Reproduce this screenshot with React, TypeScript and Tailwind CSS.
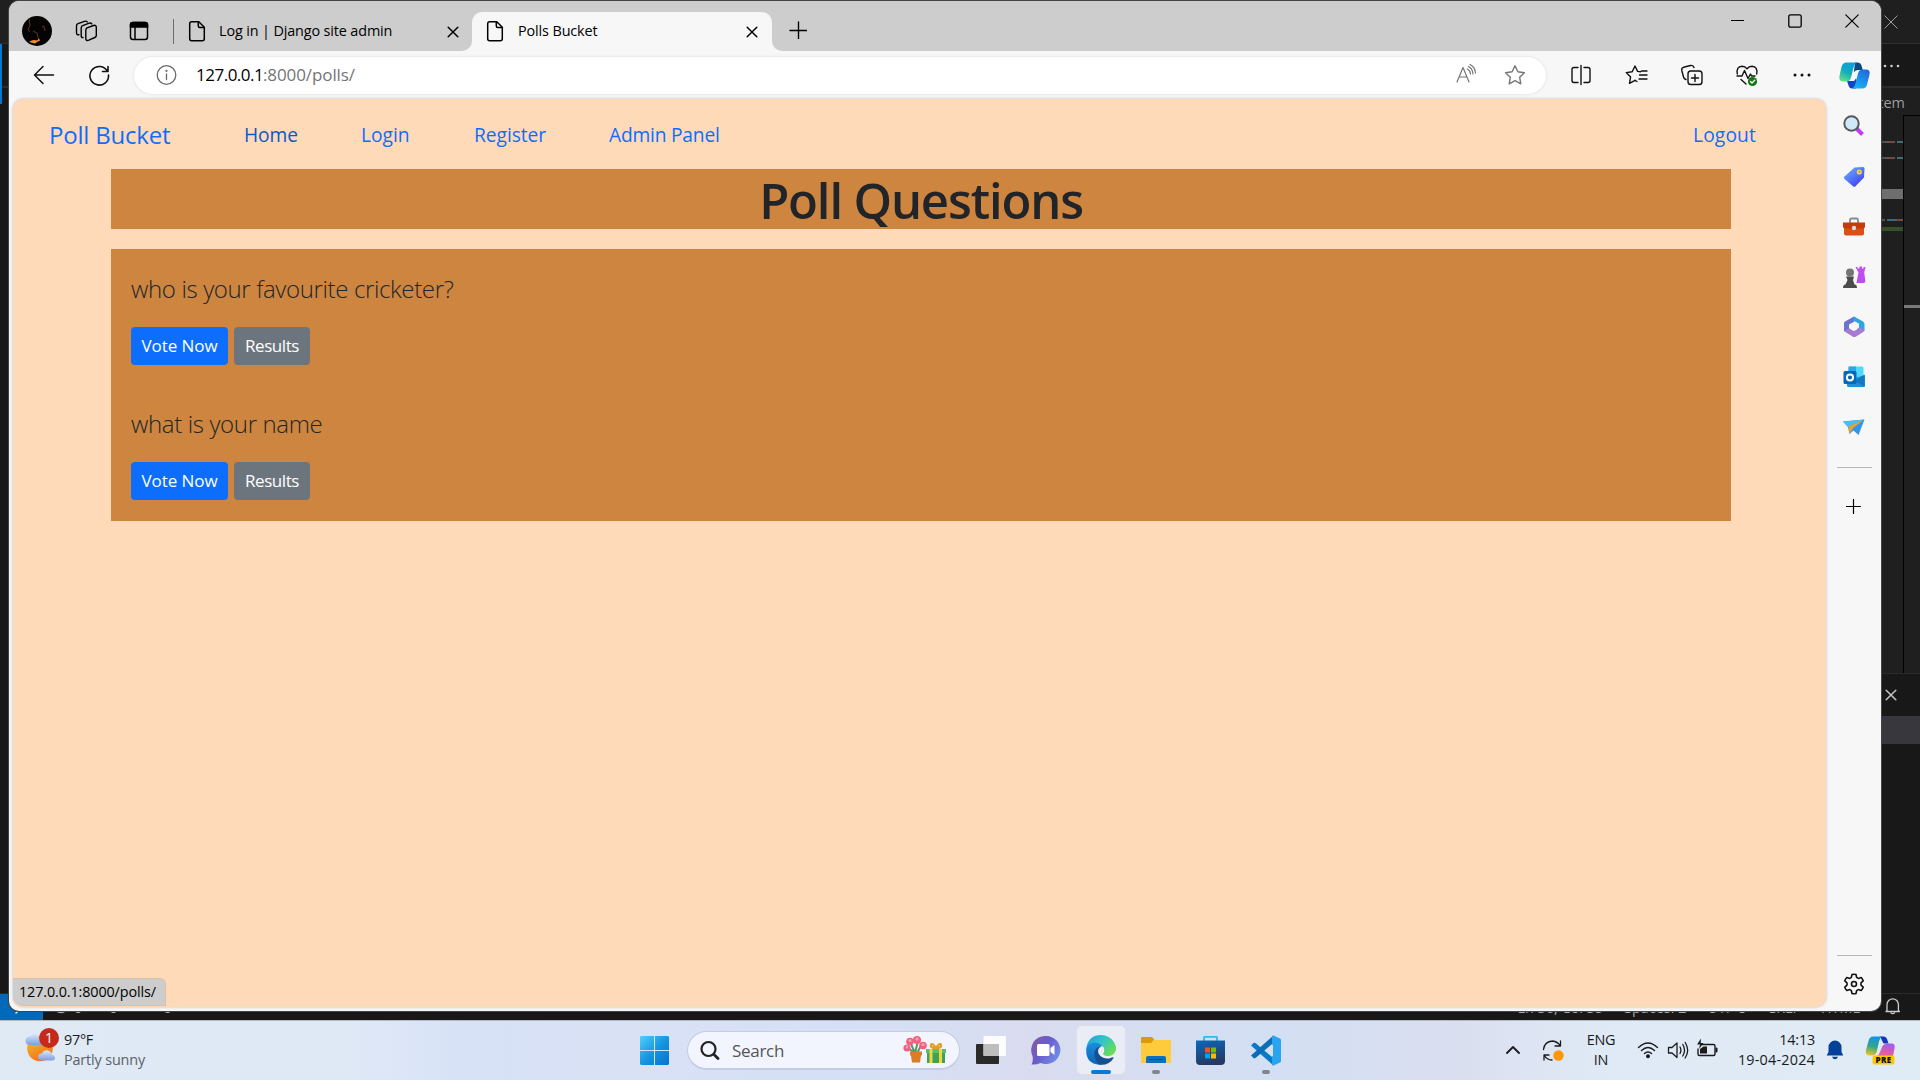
import type { ReactNode } from 'react';

function Icon({ size = 24, className = '', sw = 1.3, children }: { size?: number; className?: string; sw?: number; children: ReactNode }) {
  return (
    <svg
      width={size}
      height={size}
      viewBox={`0 0 ${size} ${size}`}
      fill="none"
      stroke="currentColor"
      strokeWidth={sw}
      strokeLinecap="round"
      strokeLinejoin="round"
      className={`block shrink-0 ${className}`}
    >
      {children}
    </svg>
  );
}

const PageIcon = ({ className = '' }: { className?: string }) => (
  <Icon className={className} sw={1.5}>
    <path d="M6.500 2.700h7.300l5.500 5.500v11.500a2 2 0 0 1-2 2H6.700a2 2 0 0 1-2-2v-15a2 2 0 0 1 2-2z" />
    <path d="M13.300 3v4a1.500 1.500 0 0 0 1.500 1.500H19" />
  </Icon>
);

const CloseIcon = ({ className = '' }: { className?: string }) => (
  <Icon size={12} sw={1.5} className={className}>
    <path d="M1.200 1.200l9.600 9.600M10.800 1.200l-9.600 9.600" />
  </Icon>
);

function TabBar() {
  return (
    <div className="flex h-[50px] shrink-0 items-start bg-[#cdcdcd] text-black">
      <svg width="30" height="30" viewBox="0 0 30 30" className="mt-[15px] ml-[13px] shrink-0">
        <circle cx="15" cy="15" r="15" fill="#050303" />
        <path d="M7 2.500 8 9l-2 5 2 2M11 15l4 2 2 8M20 11l2-1 1 5" stroke="#5b3620" fill="none" />
        <path d="M7 26q4-3 8-1.500l2-2 1 2q-4 2-5 3z" fill="#f0922a" />
      </svg>
      <Icon className="mt-[18px] ml-[23px]" sw={1.4}>
        <path d="M11.500 9.200 18.500 6.500q2.800-.8 2.800 1.800v8.200q0 1.500-1.500 2l-6 2.700q-3 1-3-1.700v-8q0-1.600.7-2.300z" />
        <path d="M8 18.500q-1.800.3-1.800-1.700V9q0-1.800 1.500-2.300l6.500-2.500q1.800-.5 2.600.7" />
        <path d="M4 15.700Q1.500 16 1.500 13.700V7q0-1.800 1.500-2.300l6.500-2.400q1.800-.6 2.700.6" />
      </Icon>
      <Icon className="mt-[18px] ml-7" sw={1.5}>
        <rect x="3.500" y="3.500" width="17" height="17" rx="2.500" />
        <path d="M3.500 8V6a2.500 2.500 0 0 1 2.500-2.500h12A2.500 2.500 0 0 1 20.500 6v2z" fill="currentColor" />
        <path d="M8 8v12" />
      </Icon>
      <div className="mt-[18px] ml-[22px] h-[25px] w-px bg-[#6e6e6e]" />
      <PageIcon className="mt-[18px] ml-[11px]" />
      <span className="mt-[18px] ml-[10px] w-[228px] text-[14.4px] leading-6 tracking-[-0.13px] whitespace-nowrap">Log in | Django site admin</span>
      <CloseIcon className="mt-[25px]" />
      <div className="mt-[40px] ml-[3px] h-[10px] w-[10px] bg-[#f7f7f7]">
        <div className="h-full w-full rounded-br-[10px] bg-[#cdcdcd]" />
      </div>
      <div className="mt-[11px] flex h-[39px] w-[300px] rounded-t-[10px] bg-[#f7f7f7]">
        <PageIcon className="mt-[7px] ml-[11px]" />
        <span className="mt-[7px] ml-[11px] w-[228px] text-[14.4px] leading-6 tracking-[-0.12px]">Polls Bucket</span>
        <CloseIcon className="mt-[14px]" />
      </div>
      <div className="mt-[40px] h-[10px] w-[10px] bg-[#f7f7f7]">
        <div className="h-full w-full rounded-bl-[10px] bg-[#cdcdcd]" />
      </div>
      <Icon size={18} sw={1.4} className="mt-[20px] ml-[7px]">
        <path d="M9.500 1v17M1 9.500h17" />
      </Icon>
      <div className="mt-[13px] mr-[22px] ml-auto flex gap-[43px]">
        <Icon size={14} sw={1.2}><path d="M0 6.500h13" strokeLinecap="butt" /></Icon>
        <Icon size={14} sw={1.3}><rect x=".8" y=".8" width="12.400" height="12.400" rx="1.800" /></Icon>
        <Icon size={14} sw={1.2}><path d="M.8.800l12.400 12.400M13.200.800.800 13.200" /></Icon>
      </div>
    </div>
  );
}

const CopilotLogo = () => (
  <svg width="31" height="27" viewBox="0 0 31 27" className="block shrink-0">
    <defs>
      <linearGradient id="cpA" x1=".6" y1="0" x2=".2" y2="1">
        <stop offset="0" stopColor="#0a9de0" />
        <stop offset=".5" stopColor="#12aeb8" />
        <stop offset="1" stopColor="#66e08a" />
      </linearGradient>
      <linearGradient id="cpB" x1=".8" y1="0" x2=".2" y2="1">
        <stop offset="0" stopColor="#2168d8" />
        <stop offset="1" stopColor="#17b6fb" />
      </linearGradient>
    </defs>
    <path d="M16 .5h3q2.600 0 3.300 2.500l1.500 5h-5q-3 0-4 2.500z" fill="#0b4a80" />
    <path d="M8 19h7l2-2.500 2 4.500-2 5.500h-4q-2.500 0-3.300-2.500z" fill="#1443c4" />
    <path d="M7.500.5h10q-2 1-3 5L12 15.500q-1 4-4.500 4H4q-4.500 0-3.500-5.500l2-9Q3.500.5 7.500.5z" fill="url(#cpA)" />
    <path d="M23.500 7.500H27q4.500 0 3.500 5l-2.200 9q-1 5-5 5h-10q2-.8 3-4.500L19 11.500q1-4 4.500-4z" fill="url(#cpB)" />
  </svg>
);

function Toolbar() {
  return (
    <div className="flex h-12 shrink-0 items-center bg-[#f7f7f7] text-[#111]">
      <Icon className="ml-[23px]" sw={1.5}>
        <path d="M21.500 12H2.500M11 3.500 2.500 12l8.500 8.500" />
      </Icon>
      <Icon className="ml-[31px]" sw={1.6}>
        <path d="M20.500 8.500A9.300 9.300 0 1 0 21.500 12M21 3.500v5h-5.500" />
      </Icon>
      <div className="ml-[23px] flex h-[37px] w-[1412px] items-center rounded-full bg-white shadow-[0_0_3px_rgba(0,0,0,0.12)]">
        <Icon className="ml-5 text-[#6a6a6a]">
          <circle cx="12.500" cy="12" r="9.300" />
          <path d="M12.500 11v5.500" />
          <circle cx="12.500" cy="7.800" r=".5" fill="currentColor" />
        </Icon>
        <div className="ml-[18px] text-[17px] leading-6 text-[#757575]">
          <span className="inline-block w-[67px] tracking-[-0.5px] text-black">127.0.0.1</span>
          <span className="tracking-[-0.1px]">:8000/polls/</span>
        </div>
        <Icon className="ml-auto text-[#767676]" sw={1.2}>
          <path d="M3 19 9 4.500 15 19M5.200 14h7.600M13.500 6q2.500 1.500 3 5M14.500 3.500q4 2 4.500 7.500M16 1.500q5 2.500 5.500 8.500" />
        </Icon>
        <Icon className="mr-[19px] ml-[25px] text-[#767676]" sw={1.4}>
          <path d="m12 2.800 2.900 6 6.500.9-4.700 4.600 1.100 6.500L12 17.700l-5.800 3.100 1.100-6.500-4.700-4.600 6.500-.9z" />
        </Icon>
      </div>
      <Icon className="ml-[23px]" sw={1.4}>
        <path d="M9 4.500H5a2 2 0 0 0-2 2v11a2 2 0 0 0 2 2h4M15 4.500h4a2 2 0 0 1 2 2v11a2 2 0 0 1-2 2h-4M12 2.500v19" />
      </Icon>
      <Icon className="ml-8" sw={1.4}>
        <path d="M15.500 8.700 12.600 8.400 10 3 7.200 8.700l-6 .9 4.400 4.300-1.100 6.400L10 17.300M14.500 12H22M14 16h8M16.500 8H22M10 17.300l2 1.200" />
      </Icon>
      <Icon className="ml-[31px]" sw={1.4}>
        <rect x="8" y="8" width="14" height="13.500" rx="2.800" />
        <path d="M15 11.500v7M11.500 15h7M6 16.500Q4 16 3.500 14L1.800 7.500Q1.300 5 3.500 4.300L10.500 2.500q2.800-.5 3.500 2" />
      </Icon>
      <Icon className="ml-[31px]" sw={1.4}>
        <path d="M2.300 11Q1 3.500 7 3.200q3.200 0 5 2.600Q14 3.200 17 3.200q6 .3 4.700 7.800M2 13h5l2.500-5.500 3.500 8 2.500-4.500 1 2H20M6 16.500l5 4.500" />
        <circle cx="17.500" cy="18.500" r="4.600" fill="#107c10" stroke="none" />
        <path d="m15.500 18.500 1.500 1.500 2.700-2.800" stroke="#fff" />
      </Icon>
      <Icon className="ml-[31px]" sw={0}>
        <g fill="#111"><circle cx="5" cy="12" r="1.500" /><circle cx="12" cy="12" r="1.500" /><circle cx="19" cy="12" r="1.500" /></g>
      </Icon>
      <div className="ml-[25px]"><CopilotLogo /></div>
    </div>
  );
}

const nav = 'text-[19.2px] leading-7 whitespace-nowrap text-[#0d6efd]';

function Poll({ question, gap }: { question: string; gap: string }) {
  return (
    <article className={gap}>
      <p className="text-[24px] leading-[38px] font-light tracking-[-0.36px] text-[#212529]">{question}</p>
      <div className="mt-[19px] flex gap-[6px] text-[17px] text-white">
        <button className="h-[38px] w-[97px] rounded-[4px] bg-[#0d6efd] tracking-[-0.05px]">Vote Now</button>
        <button className="h-[38px] w-[76px] rounded-[4px] bg-[#6c757d] tracking-[-0.45px]">Results</button>
      </div>
    </article>
  );
}

function PollsPage() {
  return (
    <main className="flex h-[908px] w-[1813px] flex-col overflow-hidden rounded-[10px] bg-[#ffdab9] shadow-[0_0_3px_rgba(0,0,0,0.25)]">
      <nav className="flex h-[70px] shrink-0 items-center pt-[2px] pr-[70px] pl-9">
        <a className="w-[195px] text-[24px] leading-8 tracking-[-0.2px] text-[#0d6efd]">Poll Bucket</a>
        <a className="w-[117px] text-[19.2px] leading-7 tracking-[-0.1px] text-[#0a58ca]">Home</a>
        <a className={`w-[113px] ${nav}`}>Login</a>
        <a className={`w-[135px] tracking-[-0.05px] ${nav}`}>Register</a>
        <a className={`tracking-[-0.2px] ${nav}`}>Admin Panel</a>
        <a className={`ml-auto tracking-[0.15px] ${nav}`}>Logout</a>
      </nav>
      <div className="mr-[95px] ml-[98px] flex flex-col gap-5">
        <h1 className="h-[60px] bg-[#cd853f] text-center text-[49px] leading-[62px] font-semibold tracking-[-1.150px] text-[#212529]">Poll Questions</h1>
        <section className="h-[272px] bg-[#cd853f] px-5 pt-[21px]">
          <Poll question="who is your favourite cricketer?" gap="mb-10" />
          <Poll question="what is your name" gap="" />
        </section>
      </div>
    </main>
  );
}

function Sidebar() {
  return (
    <aside className="flex flex-1 flex-col items-center pl-px">
      <svg width="24" height="24" viewBox="0 0 24 24" className="mt-[15px] shrink-0">
        <path d="m14.500 14.500 6 6" stroke="#c13df5" strokeWidth="4" />
        <circle cx="9.500" cy="9.500" r="7.200" fill="#cfe9fb" stroke="#585858" strokeWidth="2" />
      </svg>
      <svg width="24" height="24" viewBox="0 0 24 24" className="mt-[27px] shrink-0">
        <defs>
          <linearGradient id="tag" x1="0" y1="0" x2=".8" y2="1"><stop offset="0" stopColor="#6fb6ff" /><stop offset="1" stopColor="#3d3df0" /></linearGradient>
        </defs>
        <path d="M12.500 2.500 21 2q1.500 0 1.500 1.500l-.5 9-8.500 8.800q-1.200 1-2.500 0L2.500 14q-1.200-1.200 0-2.500z" fill="url(#tag)" />
        <circle cx="17.300" cy="7" r="2.600" fill="#ffd335" />
        <circle cx="17.500" cy="6.800" r=".9" fill="#5b8ff5" />
      </svg>
      <svg width="24" height="24" viewBox="0 0 24 24" className="mt-[27px] shrink-0">
        <path d="M8 7V4q0-1.500 1.500-1.500h5Q16 2.500 16 4v3" fill="none" stroke="#8a8a8a" strokeWidth="1.800" />
        <path d="M2 11h20v6.500q0 2-2 2H4q-2 0-2-2z" fill="#dc4f15" />
        <path d="M1 6.500h22v4q0 2-2 2H3q-2 0-2-2z" fill="#c43c0b" />
        <circle cx="12" cy="12" r="2.200" fill="#d9d9d9" />
      </svg>
      <svg width="24" height="24" viewBox="0 0 24 24" className="mt-[25px] shrink-0">
        <path d="M13.500 2h2v1.500h2V1.500h2.500v2h1.500V2h2l-1.300 5.500 1 7.300q.5 3.200-1.700 3.200h-7l2-10.500z" fill="#bf4bf3" />
        <circle cx="8" cy="7.500" r="4" fill="#757575" />
        <path d="M4 11.500h8L11 15l1.500 4.500q2.500 0 2.500 3.500H1q0-3.500 2.500-3.500L5.500 15z" fill="#4c4c4c" />
      </svg>
      <svg width="24" height="24" viewBox="0 0 24 24" className="mt-[26px] shrink-0">
        <path d="m12 1.500-9 5q-1 .6-1 2v7.500l5 3V9.500l9-5z" fill="#6d71cf" />
        <path d="m12 1.500 9 5q1.500 1 1.500 2.500v7L17 13V8.700l-6-3.500z" fill="#2ea7e0" />
        <path d="m2.300 16 8.500 5.700q1.500.8 3 0l7.700-5q1-.8 1-2L17 12.500l-5 3.600-5-2.800z" fill="#a77bd4" />
        <circle cx="12" cy="11.800" r="3.700" fill="#f7f7f7" />
      </svg>
      <svg width="24" height="24" viewBox="0 0 24 24" className="mt-[26px] shrink-0">
        <rect x="6.500" y="1.500" width="15" height="14" rx="1.500" fill="#50d9ff" />
        <path d="M6.500 1.500h7.500v14H6.500z" fill="#28a8ea" />
        <path d="M5 13h8l10-3v10.500q0 1.500-1.500 1.500h-15Q5 22 5 20.500z" fill="#1b90df" />
        <path d="m13 16 9.500-6.500v12z" fill="#1278c4" />
        <rect x="1.500" y="6" width="13" height="13" rx="1.500" fill="#0669b8" />
        <circle cx="8" cy="12.500" r="3.100" fill="none" stroke="#fff" strokeWidth="2" />
      </svg>
      <svg width="24" height="24" viewBox="0 0 24 24" className="mt-[26px] shrink-0">
        <path d="M1 6.500 22.500 4.500 16.500 20l-5-4.500-4 3.500L6 12z" fill="#2f95ee" />
        <path d="M1 6.500 22.500 4.500 6 12z" fill="#45c0f5" />
        <path d="M22 4.800 6.500 11.500 8 19l3-6z" fill="#f2a21b" />
      </svg>
      <div className="mt-[28px] h-px w-[35px] shrink-0 bg-[#b9b9b9]" />
      <Icon size={16} sw={1.2} className="mt-[31px]"><path d="M7.500 .5v14M.500 7.500h14" /></Icon>
      <div className="mt-auto h-px w-[35px] shrink-0 bg-[#b9b9b9]" />
      <Icon className="mt-4 mb-[15px] text-[#111]" sw={1.6}>
        <path d="M10 2.500q2-.6 4 0l.6 2.900 1.700 1 2.900-.9q1.500 1.500 2 3.400l-2.200 2v2.200l2.200 2q-.5 1.900-2 3.400l-2.900-.9-1.700 1-.6 2.900q-2 .6-4 0l-.6-2.900-1.700-1-2.900.9q-1.500-1.500-2-3.400l2.200-2v-2.200l-2.200-2q.5-1.900 2-3.400l2.900.9 1.700-1z" />
        <circle cx="12" cy="12" r="2.500" />
      </Icon>
    </aside>
  );
}

function Browser() {
  return (
    <div className="absolute top-px left-[9px] flex h-[1010px] w-[1872px] flex-col overflow-hidden rounded-[10px] bg-[#f7f7f7] shadow-[0_0_0_1px_#444]">
      <TabBar />
      <Toolbar />
      <div className="flex min-h-0 flex-1 pl-[4px]">
        <div className="relative">
          <PollsPage />
          <div className="absolute top-[879px] left-0 h-[28px] w-[153px] rounded-tr-[6px] rounded-bl-[10px] border border-l-0 border-[#d9bfa6] bg-[#cdcdcd] pl-[6px] text-[14.4px] leading-[26px] tracking-[-0.13px] text-black">127.0.0.1:8000/polls/</div>
        </div>
        <Sidebar />
      </div>
    </div>
  );
}

function Editor() {
  return (
    <div className="flex h-[1020px] flex-col bg-[#181818] text-[#9d9d9d]">
      <div className="flex h-[44px] shrink-0 justify-end border-b border-[#2f2f2f] bg-[#1f1f1f] pt-[15px] pr-[22px]">
        <Icon size={14} sw={1}><path d="M.8.800l12.400 12.400M13.200.800.800 13.200" /></Icon>
      </div>
      <div className="flex h-[44px] shrink-0 justify-end border-b-2 border-[#2b2b2b] pr-5">
        <Icon size={18} sw={0} className="mt-[13px]">
          <g fill="#ccc"><circle cx="3" cy="9" r="1.300" /><circle cx="9.500" cy="9" r="1.300" /><circle cx="16" cy="9" r="1.300" /></g>
        </Icon>
      </div>
      <div className="ml-auto flex h-[27px] w-20 shrink-0 justify-end bg-[#1f1f1f] pr-[15px] text-[14.4px] leading-[30px] tracking-[0.1px]">item</div>
      <div className="ml-auto flex h-[558px] w-20 shrink-0 justify-end bg-[#1f1f1f]">
        <div className="flex w-[23px] flex-col">
          <div className="mt-[26px] flex h-[2px] shrink-0"><i className="w-[5px] bg-[#3b5566]" /><i className="w-[10px] bg-[#6b4f45]" /><i className="ml-[2px] w-[6px] bg-[#45687c]" /></div>
          <div className="mt-[14px] flex h-[2px] shrink-0"><i className="w-[5px] bg-[#3b5566]" /><i className="w-[10px] bg-[#6b4f45]" /><i className="ml-[2px] w-[6px] bg-[#45687c]" /></div>
          <div className="mt-[30px] h-[10px] shrink-0 bg-[#6e6e6e]" />
          <div className="mt-[20px] flex h-[2px] shrink-0"><i className="ml-[2px] w-[3px] bg-[#6b4f45]" /><i className="ml-[2px] w-[9px] bg-[#3f6680]" /><i className="w-[7px] bg-[#6b4f45]" /></div>
          <div className="mt-[6px] h-[4px] shrink-0 bg-[#36502c]" />
        </div>
        <div className="w-[17px] border-t border-l border-black pt-[189px]"><div className="h-[3px] bg-[#7a7a7a]" /></div>
      </div>
      <div className="ml-auto flex h-[43px] w-20 shrink-0 justify-end border-t border-[#2b2b2b] pt-[15px] pr-[23px] text-[#c5c5c5]"><CloseIcon /></div>
      <div className="ml-auto h-7 w-20 shrink-0 bg-[#37373d]" />
      <div className="mt-auto flex h-[27px] shrink-0 items-center border-t border-[#2b2b2b] text-[14.400px] text-[#a8a8a8]">
        <div className="flex h-full w-[43px] justify-center bg-[#0069b9]">
          <Icon size={20} className="mt-[2px] text-white"><path d="M4 17l5-5-5-5M16 12l-5-5 5-5" /></Icon>
        </div>
        <div className="ml-[9px] flex h-full items-start gap-1 leading-[28px]">
          <Icon size={18} className="mt-[2px]"><circle cx="9" cy="9.500" r="7" /><path d="m6 6.500 5 5M11 6.500l-5 5" /></Icon>
          <span>0</span>
          <Icon size={18} className="ml-[1px]"><path d="M9 3 2 18h14z" /></Icon>
          <span>0</span>
          <Icon size={18} className="ml-[20px]"><path d="M9 10v5M5 19l4-5 4 5" /></Icon>
          <span>0</span>
        </div>
        <div className="mr-[18px] ml-auto flex h-full gap-[21px] leading-[28px] whitespace-nowrap">
          <span>Ln 36, Col 35</span><span>Spaces: 2</span><span>UTF-8</span><span>CRLF</span><span className="mr-[3px]">HTML</span>
          <Icon size={18} className="mt-[3px] text-[#ccc]"><path d="M3 13.500V7.500a5.700 5.700 0 0 1 11.400 0v6l1 1H2zM7 16q1.700 1.300 3.400 0" /></Icon>
        </div>
      </div>
    </div>
  );
}

function Taskbar() {
  return (
    <div className="flex h-[60px] items-start border-t border-[#b4b9c6] bg-[linear-gradient(90deg,#e0eaf5_0%,#dfe9f6_18%,#d7e2f7_24%,#d9e1f5_32%,#d5e0f6_44%,#d9dcef_54%,#d3dff3_66%,#dadff0_76%,#e0eaf6_84%,#dfebf5_100%)] text-[14.4px] text-[#1b1b1b]">
      <svg width="36" height="36" viewBox="0 0 36 36" className="mt-[6px] ml-[24px] shrink-0">
        <defs>
          <linearGradient id="sun" x1="0" y1="0" x2=".5" y2="1"><stop offset="0" stopColor="#f6c02c" /><stop offset="1" stopColor="#f0751b" /></linearGradient>
          <linearGradient id="cl" x1="0" y1="0" x2="0" y2="1"><stop offset="0" stopColor="#dbe8fb" /><stop offset="1" stopColor="#7c9fdc" /></linearGradient>
        </defs>
        <circle cx="16" cy="21.500" r="12.800" fill="url(#sun)" />
        <path d="M6 18q-4.500 0-4.500-4.200T6 9.500Q8 6 11.500 7t4 5.500q3 .5 3 3T16 18z" fill="url(#cl)" />
        <path d="M18 33.500q-4-.5-4-3.700t4-3.300q2-4 6-3t4 4.500q3 .3 3 2.800t-3 2.700z" fill="url(#cl)" />
      </svg>
      <div className="mt-[7px] -ml-[21px] h-5 w-5 shrink-0 rounded-full bg-[#c42b1c] text-center text-[14px] leading-5 text-white">1</div>
      <div className="mt-[9px] ml-[5px] w-[576px] leading-5">
        <p className="tracking-[-0.25px]">97°F</p>
        <p className="tracking-[-0.15px] text-[#5b6066]">Partly sunny</p>
      </div>
      <svg width="29" height="29" viewBox="0 0 29 29" className="mt-[15px] shrink-0">
        <defs><linearGradient id="win" x1="0" y1="0" x2="1" y2="1"><stop offset="0" stopColor="#4fd0fb" /><stop offset=".5" stopColor="#1696e0" /><stop offset="1" stopColor="#0671cf" /></linearGradient></defs>
        <path d="M1 0h13v14H0V1zM15 0h13l1 1v13H15zM0 15h14v14H1l-1-1zM15 15h14v13l-1 1H15z" fill="url(#win)" />
      </svg>
      <div className="mt-[10px] ml-[18px] flex h-[39px] w-[273px] items-center rounded-full border border-b-2 border-[#c3cce2] bg-[#f2f5fd]">
        <Icon size={20} sw={2.2} className="ml-[12px] text-[#222]"><circle cx="8.500" cy="9" r="7" /><path d="m14 14.500 4 4" strokeWidth="2.800" /></Icon>
        <span className="mt-px ml-[12px] text-[17px] tracking-[-0.3px] text-[#555]">Search</span>
        <svg width="44" height="28" viewBox="0 0 44 28" className="mr-[12px] ml-auto">
          <path d="M8 8l4 9 3-12M19 8l-5 9M5 12l7 5" stroke="#57966b" strokeWidth="2" fill="none" />
          <g fill="#f0607f"><circle cx="7" cy="5.500" r="3.800" /><circle cx="14" cy="4" r="4" /><circle cx="20" cy="9.500" r="3.800" /><circle cx="4" cy="12" r="3.600" /></g>
          <g fill="#ff9db0"><circle cx="7" cy="4.500" r="1.500" /><circle cx="14" cy="3" r="1.700" /><circle cx="20" cy="8.500" r="1.500" /><circle cx="4" cy="11" r="1.400" /></g>
          <path d="M7 15.500h12v4h-1l-1 7H9l-1-7H7z" fill="#dc7b28" />
          <path d="M23 13h20v4h-1v10H24V17h-1z" fill="#3aa655" />
          <path d="M23 13h20v4H23z" fill="#58c06c" />
          <path d="M26.500 13h3v14h-3zM36 13h3v14h-3z" fill="#f7d33f" />
          <path d="M33 12q-6 0-5-3t5 3q4-6 5-3t-5 3" fill="none" stroke="#e2a01f" strokeWidth="2.200" />
        </svg>
      </div>
      <svg width="30" height="29" viewBox="0 0 30 29" className="mt-[15px] ml-4 shrink-0">
        <rect y="8" width="23" height="20" rx="1" fill="#2a2a29" />
        <rect x="7.500" y="0" width="22.500" height="20" rx="1" fill="#fff" fillOpacity=".9" />
        <rect x="7.500" y="8" width="15.500" height="12" fill="#bdbdbd" />
      </svg>
      <svg width="30" height="30" viewBox="0 0 30 30" className="mt-[15px] ml-[25px] shrink-0">
        <defs><linearGradient id="tm" x1="0" y1="0" x2="1" y2=".6"><stop offset="0" stopColor="#8a5aa0" /><stop offset=".5" stopColor="#6a5cc8" /><stop offset="1" stopColor="#6f8be8" /></linearGradient></defs>
        <path d="M14.500 0a14.500 14 0 1 1-5 27q-4 2-9 1.500Q2.500 25 1.500 20A14 14 0 0 1 14.500 0z" fill="url(#tm)" />
        <rect x="6" y="8" width="12.500" height="12" rx="1.500" fill="#fff" /><path d="m19.500 12 4-3v10l-4-3z" fill="#fff" />
      </svg>
      <div className="mt-[5px] ml-4 flex h-12 w-12 flex-col items-center rounded-[5px] bg-[#ebedf6] pt-[9px] shadow-[0_0_0_1px_#dcdfeb]">
        <svg width="30" height="30" viewBox="0 0 30 30" className="shrink-0">
          <defs>
            <linearGradient id="eg" x1="0" y1="0" x2="1" y2=".7"><stop offset="0" stopColor="#1d9be0" /><stop offset=".5" stopColor="#33c5c8" /><stop offset="1" stopColor="#6be04c" /></linearGradient>
            <linearGradient id="eb" x1="0" y1="0" x2="0" y2="1"><stop offset="0" stopColor="#1a8fe0" /><stop offset="1" stopColor="#0c63b8" /></linearGradient>
          </defs>
          <path d="M.5 12Q3 0 15 0q8 0 12.500 6.500T29 17q-2 4.500-8 4-6-.8-3-4.500 1-3-1.500-5Q9 6 .5 12z" fill="url(#eg)" />
          <path d="M.3 13Q2 8 8 7.500q6 0 8.500 4-5 1-5 7 1 8 9 8.500-3 3-7 2.800Q-1 28.500.3 13z" fill="url(#eb)" />
          <path d="M16.500 11.500q-6.500-1-8 6-.5 7 5 12.200 9.500 1 14.300-7-1-1-2.500 0-6 2.500-11-2.200-1.800-4 2.200-9z" fill="#14508f" />
          <path d="M16.500 11q-4.500 1-4.500 5.500 0 3 3 5 6 3.500 12-.5-9 2-10-2.500 2.500-3-.5-7.500z" fill="#ebedf6" />
        </svg>
        <div className="mt-[5px] h-1 w-5 rounded-full bg-[#0a78d6]" />
      </div>
      <div className="mt-[15px] ml-4 flex flex-col items-center">
        <svg width="30" height="29" viewBox="0 0 30 29">
          <path d="M0 1.500Q0 1 1 1h10l2.500 3-3 5H0z" fill="#dd9a07" />
          <path d="M0 7h10l2.500-3H29q1 0 1 1v21q0 1-1 1H1q-1 0-1-1z" fill="#fdcb3c" />
          <path d="M5 27v-5q0-2 2-2h16q2 0 2 2v5z" fill="#0b6fc4" /><path d="M8 23.500h14" stroke="#0a4f96" />
        </svg>
        <div className="mt-[5px] h-1 w-2 rounded-full bg-[#808590]" />
      </div>
      <svg width="29" height="30" viewBox="0 0 29 30" className="mt-[15px] ml-[25px] shrink-0">
        <defs><linearGradient id="st" x1="0" y1="0" x2=".3" y2="1"><stop offset="0" stopColor="#0b68bd" /><stop offset="1" stopColor="#243a63" /></linearGradient></defs>
        <path d="M8 6V1.800q0-1 1-1h11q1 0 1 1V6" fill="none" stroke="#2fb9ef" strokeWidth="1.800" />
        <path d="M0 4.500h29V25q0 4-4 4H4q-4 0-4-4z" fill="url(#st)" />
        <path d="M9 11.500h5v5H9z" fill="#f25022" /><path d="M15 11.500h5v5h-5z" fill="#7fba00" /><path d="M9 17.500h5v5H9z" fill="#00a4ef" /><path d="M15 17.500h5v5h-5z" fill="#ffb900" />
      </svg>
      <div className="mt-[14px] ml-[26px] flex flex-col items-center">
        <svg width="30" height="31" viewBox="0 0 30 31">
          <path d="m0 10.500 2.500-2.500q1-.7 2 0L24 24.500l-1.500 6z" fill="#0a79c8" />
          <path d="m0 20.500 2.500 2.500q1 .7 2 0L24 6.500 22.500.5z" fill="#0b6db5" />
          <path d="m22.500.5 6.500 3q1 .5 1 1.500v21q0 1-1 1.500l-6.500 3Q21 31 21 29V2q0-2 1.500-1.500z" fill="#29a4ee" />
          <path d="M22 9.500v12L14 15.500z" fill="#d5def3" />
        </svg>
        <div className="mt-[4px] h-1 w-2 rounded-full bg-[#808590]" />
      </div>
      <Icon size={14} sw={1.800} className="mt-[22px] ml-auto"><path d="m1 10 6-6 6 6" /></Icon>
      <Icon size={24} sw={1.300} className="mt-[18px] ml-[21px]">
        <path d="M2.500 10.500q1-8 9-8.500 5 .5 8 5V2M19.500 7h-5.500M3 16h5M3 16v5M3 16q3 5 8 5" />
        <circle cx="17.500" cy="16.500" r="5.200" fill="#ff9800" stroke="none" />
      </Icon>
      <div className="mt-[9px] ml-[21px] w-[30px] text-center leading-5 tracking-[-0.3px]"><p>ENG</p><p>IN</p></div>
      <Icon size={22} sw={1.400} className="mt-[18px] ml-[21px]">
        <path d="M1.500 8.500q9.500-9 19 0M4.500 11.500q6.500-6 13 0M7.500 14.500q3.500-3.200 7 0" /><circle cx="11" cy="17.300" r="1.300" fill="currentColor" />
      </Icon>
      <Icon size={22} sw={1.300} className="mt-[18px] ml-[8px]">
        <path d="M1.500 8.500H5L10 4v14.500L5 14H1.500zM13 8q1.800 3.200 0 6.500M15.800 5.500q3.500 5.700 0 11.500M18.200 3.500q5 7.800 0 15.500" />
      </Icon>
      <Icon size={22} sw={1.400} className="mt-[17px] ml-[7px]">
        <path d="M6 6.500h11.500a1.500 1.500 0 0 1 1.500 1.500v8a1.500 1.500 0 0 1-1.500 1.500h-14A1.500 1.500 0 0 1 2 16v-5" /><path d="M20.500 10.500v3" strokeWidth="2" />
        <path d="M4 15.500v-4.500L7.500 8.500h3.500v7z" fill="currentColor" stroke="none" /><path d="m5 .500-4 6h3l-1 4.500 4.500-6H4.700z" fill="currentColor" stroke="none" />
      </Icon>
      <div className="mt-[9px] ml-[13px] w-[84px] text-right leading-5"><p className="tracking-[-0.2px]">14:13</p><p className="tracking-[0.2px]">19-04-2024</p></div>
      <svg width="18" height="20" viewBox="0 0 18 20" className="mt-[19px] ml-[11px] shrink-0">
        <path d="M9 .5a6.500 6.500 0 0 1 6.500 6.500v5l1.800 3.500H.7L2.500 12V7A6.500 6.500 0 0 1 9 .5zM6 16.800h6q-1 2.500-3 2.500t-3-2.500z" fill="#04409a" />
      </svg>
      <div className="mt-[15px] mr-[24px] ml-[21px] shrink-0">
        <svg width="31" height="29" viewBox="0 0 31 29">
          <defs>
            <linearGradient id="pa" x1=".4" y1="0" x2=".2" y2="1"><stop offset="0" stopColor="#1592e6" /><stop offset=".5" stopColor="#2fa58c" /><stop offset="1" stopColor="#f5c518" /></linearGradient>
            <linearGradient id="pb" x1=".6" y1="0" x2=".3" y2="1"><stop offset="0" stopColor="#a45af0" /><stop offset="1" stopColor="#f4608a" /></linearGradient>
          </defs>
          <path d="M15 .5h4q2 0 3 2.500l1.500 4.500h-5z" fill="#1438b8" />
          <path d="M8 .5h9q-2 1-3 5l-2 9q-1 5-4.500 5H4Q0 19 1 14L3.500 5Q4.500.5 8 .5z" fill="url(#pa)" />
          <path d="M23 7.500h3.500q4 0 3 5L28 20H12q2-1 3-4l2-5q1.500-3.500 6-3.500z" fill="url(#pb)" />
          <rect x="7.500" y="19.500" width="22" height="9" rx="2" fill="#ffc800" />
          <text x="18.500" y="27" textAnchor="middle" fontSize="8" fontWeight="800" letterSpacing=".4" fill="#111">PRE</text>
        </svg>
      </div>
    </div>
  );
}

export default function App() {
  return (
    <div className="relative h-[1080px] w-[1920px] overflow-hidden font-['Open_Sans','Noto_Sans',sans-serif]">
      <Editor />
      <div className="absolute top-[44px] left-0 h-[60px] w-[2px] bg-[#0078d4]" />
      <Browser />
      <Taskbar />
    </div>
  );
}
